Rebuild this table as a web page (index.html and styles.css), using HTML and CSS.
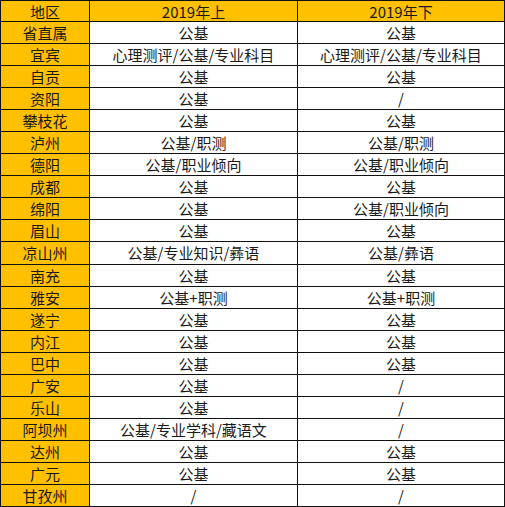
FILE: index.html
```html
<!DOCTYPE html>
<html lang="zh-CN">
<head>
<meta charset="utf-8">
<link rel="stylesheet" href="styles.css">
</head>
<body>
<div class="table">
  <div class="cell head">地区</div><div class="cell head">2019年上</div><div class="cell head">2019年下</div>
  <div class="cell area">省直属</div><div class="cell">公基</div><div class="cell">公基</div>
  <div class="cell area">宜宾</div><div class="cell">心理测评/公基/专业科目</div><div class="cell">心理测评/公基/专业科目</div>
  <div class="cell area">自贡</div><div class="cell">公基</div><div class="cell">公基</div>
  <div class="cell area">资阳</div><div class="cell">公基</div><div class="cell">/</div>
  <div class="cell area">攀枝花</div><div class="cell">公基</div><div class="cell">公基</div>
  <div class="cell area">泸州</div><div class="cell">公基/职测</div><div class="cell">公基/职测</div>
  <div class="cell area">德阳</div><div class="cell">公基/职业倾向</div><div class="cell">公基/职业倾向</div>
  <div class="cell area">成都</div><div class="cell">公基</div><div class="cell">公基</div>
  <div class="cell area">绵阳</div><div class="cell">公基</div><div class="cell">公基/职业倾向</div>
  <div class="cell area">眉山</div><div class="cell">公基</div><div class="cell">公基</div>
  <div class="cell area">凉山州</div><div class="cell">公基/专业知识/彝语</div><div class="cell">公基/彝语</div>
  <div class="cell area">南充</div><div class="cell">公基</div><div class="cell">公基</div>
  <div class="cell area">雅安</div><div class="cell">公基+职测</div><div class="cell">公基+职测</div>
  <div class="cell area">遂宁</div><div class="cell">公基</div><div class="cell">公基</div>
  <div class="cell area">内江</div><div class="cell">公基</div><div class="cell">公基</div>
  <div class="cell area">巴中</div><div class="cell">公基</div><div class="cell">公基</div>
  <div class="cell area">广安</div><div class="cell">公基</div><div class="cell">/</div>
  <div class="cell area">乐山</div><div class="cell">公基</div><div class="cell">/</div>
  <div class="cell area">阿坝州</div><div class="cell">公基/专业学科/藏语文</div><div class="cell">/</div>
  <div class="cell area">达州</div><div class="cell">公基</div><div class="cell">公基</div>
  <div class="cell area">广元</div><div class="cell">公基</div><div class="cell">公基</div>
  <div class="cell area">甘孜州</div><div class="cell">/</div><div class="cell">/</div>
</div>
</body>
</html>
```

FILE: styles.css
```css
html, body {
  margin: 0;
  padding: 0;
  background: #ffffff;
}
body {
  width: 505px;
  height: 507px;
  overflow: hidden;
}
.table {
  display: grid;
  grid-template-columns: 88px 207px 206px;
  grid-template-rows: 20px repeat(22, 21.05px);
  gap: 1px;
  padding: 1px;
  background: #111111;
  width: 505px;
  box-sizing: border-box;
  font-family: "Noto Sans CJK SC", "Microsoft YaHei", sans-serif;
  font-size: 15px;
  color: #1a1a1a;
}
.cell {
  background: #ffffff;
  display: flex;
  align-items: center;
  justify-content: center;
  line-height: 1;
  white-space: nowrap;
}
.head, .area {
  background: #ffc000;
}
```
